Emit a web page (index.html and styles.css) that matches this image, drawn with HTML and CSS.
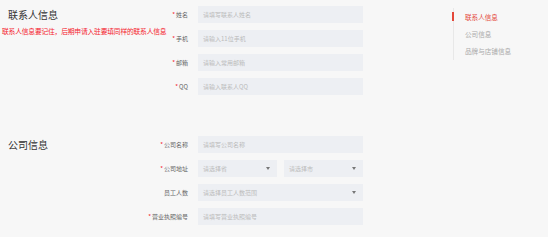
FILE: index.html
```html
<!DOCTYPE html>
<html lang="zh-CN">
<head>
    <meta charset="UTF-8">
    <meta name="viewport" content="width=device-width, initial-scale=1.0">
    <title>入驻信息</title>
    <link rel="stylesheet" href="styles.css">
</head>
<body>
    <div class="pagina">
        <div class="formulario">
            <!-- Contacto -->
            <div class="seccion">
                <div class="lateral">
                    <h2 class="titulo">联系人信息</h2>
                    <p class="aviso">联系人信息要记住，后期申请入驻要填同样的联系人信息</p>
                </div>
                <div class="campos">
                    <div class="fila">
                        <label class="etiqueta"><span class="obligatorio">*</span>姓名</label>
                        <input class="entrada" type="text" placeholder="请填写联系人姓名">
                    </div>
                    <div class="fila">
                        <label class="etiqueta"><span class="obligatorio">*</span>手机</label>
                        <input class="entrada" type="text" placeholder="请输入11位手机">
                    </div>
                    <div class="fila">
                        <label class="etiqueta"><span class="obligatorio">*</span>邮箱</label>
                        <input class="entrada" type="text" placeholder="请输入常用邮箱">
                    </div>
                    <div class="fila">
                        <label class="etiqueta"><span class="obligatorio">*</span>QQ</label>
                        <input class="entrada" type="text" placeholder="请输入联系人QQ">
                    </div>
                </div>
            </div>

            <!-- Empresa -->
            <div class="seccion">
                <div class="lateral">
                    <h2 class="titulo">公司信息</h2>
                </div>
                <div class="campos">
                    <div class="fila">
                        <label class="etiqueta"><span class="obligatorio">*</span>公司名称</label>
                        <input class="entrada" type="text" placeholder="请填写公司名称">
                    </div>
                    <div class="fila">
                        <label class="etiqueta"><span class="obligatorio">*</span>公司地址</label>
                        <div class="grupo">
                            <div class="selector">请选择省</div>
                            <div class="selector">请选择市</div>
                        </div>
                    </div>
                    <div class="fila">
                        <label class="etiqueta">员工人数</label>
                        <div class="selector ancho">请选择员工人数范围</div>
                    </div>
                    <div class="fila">
                        <label class="etiqueta"><span class="obligatorio">*</span>营业执照编号</label>
                        <input class="entrada" type="text" placeholder="请填写营业执照编号">
                    </div>
                </div>
            </div>
        </div>

        <ul class="menu">
            <li class="opcion activa">联系人信息</li>
            <li class="opcion">公司信息</li>
            <li class="opcion">品牌与店铺信息</li>
        </ul>
    </div>
</body>
</html>
```

FILE: styles.css
```css
* {
    box-sizing: border-box;
}

body {
    margin: 0;
    background-color: #f7f7f7;
    font-family: "Noto Sans CJK SC", "Noto Sans", sans-serif;
    color: #333;
}

.pagina {
    display: flex;
    padding-top: 6px;
}

.formulario {
    width: 453px;
    display: flex;
    flex-direction: column;
    gap: 41px;
}

.seccion {
    display: flex;
}

.lateral {
    width: 145px;
}

.titulo {
    margin: 0 0 0 8px;
    height: 17px;
    line-height: 17px;
    font-size: 10px;
    font-weight: normal;
    color: #333;
}

.aviso {
    margin: 0 0 0 2px;
    height: 17px;
    line-height: 17px;
    font-size: 6.8px;
    letter-spacing: -0.22px;
    color: #f5222d;
    white-space: nowrap;
}

.campos {
    display: flex;
    flex-direction: column;
    gap: 7px;
}

.fila {
    display: flex;
    align-items: center;
    height: 17px;
}

.etiqueta {
    width: 45px;
    padding-right: 2px;
    margin-right: 8px;
    text-align: right;
    font-size: 6px;
    color: #666;
    white-space: nowrap;
}

.obligatorio {
    color: #f5222d;
    margin-right: 1px;
}

.entrada,
.selector {
    width: 165px;
    height: 17px;
    border: none;
    outline: none;
    background-color: #edeff3;
    padding: 0 5px;
    font-family: inherit;
    font-size: 6px;
    line-height: 17px;
    color: #bbb;
}

.entrada::placeholder {
    color: #bbb;
}

.grupo {
    display: flex;
    gap: 7px;
}

.grupo .selector {
    width: 79px;
}

.selector {
    position: relative;
}

.selector::after {
    content: "";
    position: absolute;
    right: 7px;
    top: 7px;
    border-left: 2px solid transparent;
    border-right: 2px solid transparent;
    border-top: 3px solid #777;
}

.menu {
    list-style: none;
    margin: 2px 0 0 0;
    padding: 4px 0 4px 11px;
    border-left: 1px solid #e8e8e8;
    display: flex;
    flex-direction: column;
    gap: 7px;
    height: 52px;
}

.opcion {
    position: relative;
    font-size: 6.6px;
    line-height: 10px;
    color: #aaa;
}

.opcion.activa {
    color: #e4483a;
}

.opcion.activa::before {
    content: "";
    position: absolute;
    left: -13px;
    top: 0;
    width: 2px;
    height: 9px;
    background-color: #e4483a;
}
```
